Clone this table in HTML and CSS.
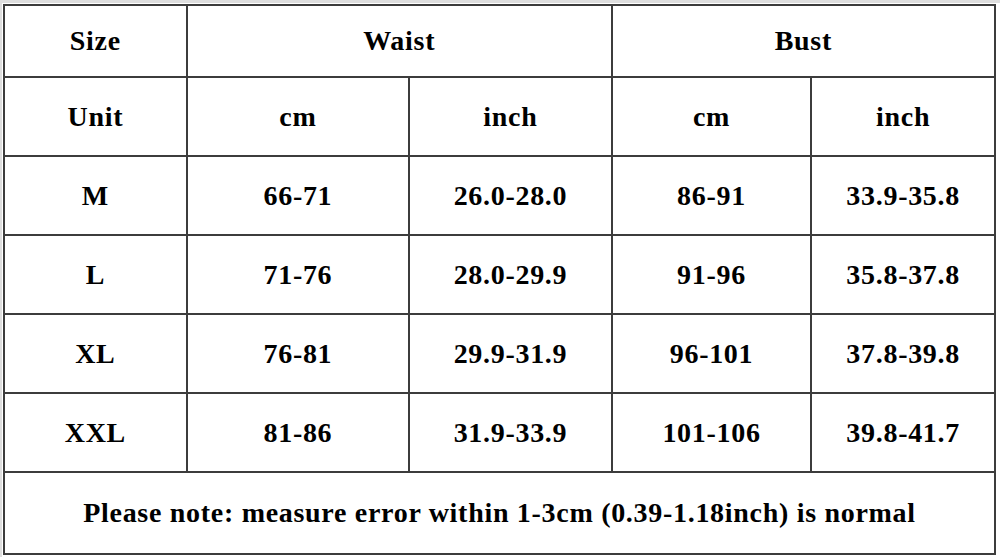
FILE: index.html
```html
<!DOCTYPE html>
<html lang="en">
<head>
    <meta charset="UTF-8">
    <meta name="viewport" content="width=device-width, initial-scale=1.0">
    <title>Size Chart</title>
    <link rel="stylesheet" href="styles.css">
</head>
<body>
    <div class="sheet">
        <table class="size-chart">
            <colgroup>
                <col class="col-size">
                <col class="col-waist-cm">
                <col class="col-waist-in">
                <col class="col-bust-cm">
                <col class="col-bust-in">
            </colgroup>
            <tr class="row-head">
                <td>Size</td>
                <td colspan="2">Waist</td>
                <td colspan="2">Bust</td>
            </tr>
            <tr>
                <td>Unit</td>
                <td>cm</td>
                <td>inch</td>
                <td>cm</td>
                <td>inch</td>
            </tr>
            <tr>
                <td>M</td>
                <td>66-71</td>
                <td>26.0-28.0</td>
                <td>86-91</td>
                <td>33.9-35.8</td>
            </tr>
            <tr>
                <td>L</td>
                <td>71-76</td>
                <td>28.0-29.9</td>
                <td>91-96</td>
                <td>35.8-37.8</td>
            </tr>
            <tr>
                <td>XL</td>
                <td>76-81</td>
                <td>29.9-31.9</td>
                <td>96-101</td>
                <td>37.8-39.8</td>
            </tr>
            <tr>
                <td>XXL</td>
                <td>81-86</td>
                <td>31.9-33.9</td>
                <td>101-106</td>
                <td>39.8-41.7</td>
            </tr>
            <tr class="row-note">
                <td colspan="5">Please note: measure error within 1-3cm (0.39-1.18inch) is normal</td>
            </tr>
        </table>
    </div>
</body>
</html>
```

FILE: styles.css
```css
* {
    margin: 0;
    padding: 0;
    box-sizing: border-box;
}

html, body {
    height: 100%;
}

body {
    background: #dedede;
    padding: 3px 0 0 2px;
    font-family: 'Liberation Serif', 'Times New Roman', serif;
}

.sheet {
    background: #fff;
    height: 100%;
    padding: 1px 3px 2px 1px;
}

.size-chart {
    width: 993px;
    border-collapse: collapse;
    color: #000;
    font-weight: bold;
    font-size: 28px;
    letter-spacing: 0.7px;
    text-align: center;
}

.size-chart td {
    border: 2px solid #3c3c3c;
    height: 79px;
    vertical-align: middle;
}

.size-chart .row-head td {
    height: 72px;
}

.size-chart .row-note td {
    height: 82px;
}

.col-size { width: 183px; }
.col-waist-cm { width: 223px; }
.col-waist-in { width: 203px; }
.col-bust-cm { width: 200px; }
.col-bust-in { width: 184px; }
```
